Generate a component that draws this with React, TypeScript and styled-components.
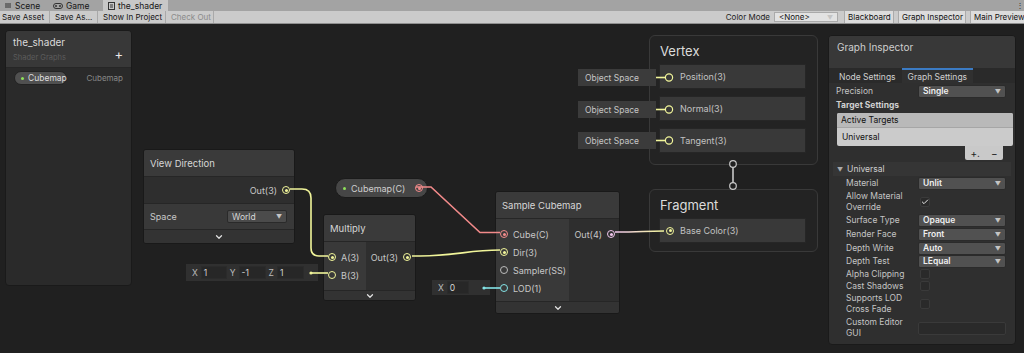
import React from "react"
import styled, { createGlobalStyle } from "styled-components"
import { ChevronDown, Check } from "lucide-react"

const YELLOW = "#f1f59a"
const RED = "#f28a8a"
const PINK = "#f0c6ec"
const CYAN = "#84e4e7"

const GlobalStyle = createGlobalStyle`
  html, body { margin: 0; padding: 0; background: #202020; }
  body { font-family: Inter, "Noto Sans", sans-serif; -webkit-font-smoothing: antialiased; }
  * { box-sizing: border-box; }
`

const Window = styled.div`
  width: 1024px;
  height: 353px;
  display: flex;
  flex-direction: column;
  overflow: hidden;
`

/* ---------- editor chrome ---------- */

const TabBar = styled.div`
  height: 11px;
  background: #a3a3a3;
  display: flex;
  padding-left: 4px;
`

const Tab = styled.div<{ $active?: boolean; $w: number }>`
  width: ${(p) => p.$w}px;
  display: flex;
  align-items: center;
  gap: 3px;
  padding-left: ${(p) => (p.$active ? 5 : 1)}px;
  background: ${(p) => (p.$active ? "#c8c8c8" : "transparent")};
  font-size: 8.5px;
  color: #161616;
`

const TabMore = styled.div`
  margin-left: auto;
  width: 8px;
  font-size: 8px;
  line-height: 11px;
  color: #333;
`

const Toolbar = styled.div`
  height: 13px;
  background: #cbcbcb;
  display: flex;
  align-items: stretch;
  border-bottom: 1px solid #8f8f8f;
`

const ToolButton = styled.div<{ $disabled?: boolean; $w: number }>`
  width: ${(p) => p.$w}px;
  display: flex;
  align-items: center;
  padding-left: 2px;
  font-size: 8px;
  color: ${(p) => (p.$disabled ? "#8a8a8a" : "#141414")};
  border-right: 1px solid #a9a9a9;
  margin-right: 3px;
`

const ToolSpacer = styled.div`
  flex: 1;
`

const ToolLabel = styled.div`
  display: flex;
  align-items: center;
  font-size: 8px;
  color: #222;
  margin-right: 4px;
`

const ToolSelect = styled.div`
  width: 64px;
  margin: 1px 6px 1px 0;
  display: flex;
  align-items: center;
  justify-content: space-between;
  padding: 0 4px;
  background: #e2e2e2;
  border: 1px solid #aaa;
  font-size: 8px;
  color: #111;
`

const ToolToggle = styled.div<{ $w: number }>`
  width: ${(p) => p.$w}px;
  flex: none;
  display: flex;
  align-items: center;
  padding-left: 3px;
  margin-right: 4px;
  background: #dcdcdc;
  border-left: 1px solid #aaa;
  border-right: 1px solid #aaa;
  font-size: 8px;
  color: #111;
  white-space: nowrap;
  overflow: hidden;
  &:last-child {
    margin-right: 0;
    border-right: none;
  }
`

/* ---------- canvas ---------- */

const Canvas = styled.div`
  flex: 1;
  position: relative;
  background: #202020;
  overflow: hidden;
`

const Wires = styled.svg`
  position: absolute;
  inset: 0;
  z-index: 2;
  pointer-events: none;
`

const Node = styled.div<{ $x: number; $y: number; $w: number }>`
  position: absolute;
  left: ${(p) => p.$x}px;
  top: ${(p) => p.$y}px;
  width: ${(p) => p.$w}px;
  background: #2e2e2e;
  border: 1px solid #191919;
  border-radius: 3px;
  overflow: hidden;
  z-index: 1;
  color: #c8c8c8;
`

const NodeHeader = styled.div`
  height: 27px;
  display: flex;
  align-items: center;
  padding-left: 6px;
  background: #3a3a3a;
  font-size: 9.5px;
  color: #d6d6d6;
  border-bottom: 1px solid #262626;
`

const NodeBody = styled.div<{ $h: number }>`
  height: ${(p) => p.$h}px;
  display: flex;
`

const InputCol = styled.div<{ $w: number }>`
  width: ${(p) => p.$w}px;
  background: #393939;
  padding-top: 6px;
  display: flex;
  flex-direction: column;
`

const OutputCol = styled.div`
  flex: 1;
  background: #2e2e2e;
  padding-top: 6px;
  display: flex;
  flex-direction: column;
  align-items: flex-end;
`

const PortRow = styled.div<{ $out?: boolean }>`
  height: 18px;
  display: flex;
  align-items: center;
  gap: 5px;
  padding: ${(p) => (p.$out ? "0 4px 0 0" : "0 0 0 4px")};
  font-size: 9px;
  color: #c8c8c8;
`

const Port = styled.span<{ $c: string; $filled?: boolean }>`
  width: 8px;
  height: 8px;
  flex: none;
  border-radius: 50%;
  border: 1.2px solid ${(p) => p.$c};
  display: inline-flex;
  align-items: center;
  justify-content: center;
  &::after {
    content: "";
    width: 3px;
    height: 3px;
    border-radius: 50%;
    background: ${(p) => (p.$filled ? p.$c : "transparent")};
  }
`

const OutSection = styled.div`
  height: 27px;
  display: flex;
  align-items: center;
  justify-content: flex-end;
  padding-right: 4px;
  gap: 5px;
  font-size: 9px;
  border-bottom: 1px solid #262626;
`

const ControlRow = styled.div`
  height: 25px;
  display: flex;
  align-items: center;
  justify-content: space-between;
  padding: 0 7px 0 6px;
  background: #393939;
  font-size: 9px;
`

const NodeSelect = styled.div<{ $w: number }>`
  width: ${(p) => p.$w}px;
  height: 13px;
  display: flex;
  align-items: center;
  justify-content: space-between;
  padding: 0 4px;
  background: #4b4b4b;
  border: 1px solid #2a2a2a;
  border-radius: 2px;
  font-size: 8.5px;
  color: #d8d8d8;
`

const Caret = styled.span`
  font-size: 6px;
  color: #c4c4c4;
`

const NodeFooter = styled.div<{ $h: number }>`
  height: ${(p) => p.$h}px;
  display: flex;
  align-items: center;
  justify-content: center;
  background: #333;
  border-top: 1px solid #262626;
  color: #e0e0e0;
`

const PropertyPill = styled.div<{ $x: number; $y: number }>`
  position: absolute;
  left: ${(p) => p.$x}px;
  top: ${(p) => p.$y}px;
  width: 93px;
  height: 20px;
  display: flex;
  align-items: center;
  gap: 5px;
  padding: 0 5px 0 7px;
  background: #464646;
  border: 1px solid #1b1b1b;
  border-radius: 10px;
  font-size: 9px;
  color: #cfcfcf;
  z-index: 1;
`

const GreenDot = styled.span`
  width: 3px;
  height: 3px;
  border-radius: 50%;
  background: #8ee05a;
  flex: none;
`

const PillSpacer = styled.span`
  flex: 1;
`

const InlineValue = styled.div<{ $x: number; $y: number; $w: number; $h: number }>`
  position: absolute;
  left: ${(p) => p.$x}px;
  top: ${(p) => p.$y}px;
  width: ${(p) => p.$w}px;
  height: ${(p) => p.$h}px;
  display: flex;
  align-items: center;
  gap: 3px;
  padding-left: 6px;
  background: #303030;
  font-size: 8.5px;
  color: #bdbdbd;
  z-index: 1;
`

const InlineField = styled.span<{ $w: number }>`
  width: ${(p) => p.$w}px;
  height: 13px;
  display: flex;
  align-items: center;
  padding-left: 2px;
  background: #272727;
  border: 1px solid #2b2b2b;
  color: #d4d4d4;
`

const ObjectSpace = styled.div<{ $y: number }>`
  position: absolute;
  left: 578px;
  top: ${(p) => p.$y}px;
  width: 78px;
  height: 17px;
  display: flex;
  align-items: center;
  padding-left: 7px;
  background: #3b3b3b;
  font-size: 8.5px;
  color: #c6c6c6;
  z-index: 3;
`

const StackBlock = styled.div<{ $y: number; $h: number }>`
  position: absolute;
  left: 649px;
  top: ${(p) => p.$y}px;
  width: 169px;
  height: ${(p) => p.$h}px;
  padding: 0 11px 0 9px;
  background: #232323;
  border: 1px solid #393939;
  border-radius: 6px;
  display: flex;
  flex-direction: column;
  gap: 5px;
  z-index: 1;
`

const StackTitle = styled.div`
  height: 23px;
  display: flex;
  align-items: flex-end;
  font-size: 13px;
  color: #dcdcdc;
  padding-left: 1px;
`

const StackSlot = styled.div`
  height: 25px;
  flex: none;
  display: flex;
  align-items: center;
  gap: 6px;
  padding-left: 6px;
  background: #393939;
  border: 1px solid #262626;
  font-size: 9px;
  color: #c2c2c2;
  & + & {
    margin-top: 2px;
  }
`

/* ---------- floating panels ---------- */

const Blackboard = styled.div`
  position: absolute;
  left: 5px;
  top: 6px;
  width: 127px;
  height: 256px;
  background: #2a2a2a;
  border: 1px solid #1a1a1a;
  border-radius: 4px;
  overflow: hidden;
  z-index: 4;
`

const BoardHeader = styled.div`
  height: 37px;
  position: relative;
  padding: 5px 7px;
  background: #383838;
  border-bottom: 1px solid #262626;
`

const BoardTitle = styled.div`
  font-size: 10px;
  color: #dadada;
`

const BoardSub = styled.div`
  margin-top: 5px;
  font-size: 7.5px;
  color: #5c5c5c;
`

const BoardAdd = styled.div`
  position: absolute;
  right: 8px;
  top: 15px;
  font-size: 13px;
  color: #e8e8e8;
`

const BoardRow = styled.div`
  display: flex;
  align-items: center;
  justify-content: space-between;
  padding: 3px 8px 0 8px;
`

const BoardPill = styled.div`
  width: 53px;
  height: 14px;
  display: flex;
  align-items: center;
  gap: 4px;
  padding-left: 6px;
  background: #505050;
  border: 1px solid #222;
  border-radius: 7px;
  font-size: 8.5px;
  color: #dedede;
`

const BoardType = styled.div`
  font-size: 8px;
  color: #888;
`

const Inspector = styled.div`
  position: absolute;
  left: 828px;
  top: 11px;
  width: 188px;
  height: 310px;
  background: #2f2f2f;
  border: 1px solid #1a1a1a;
  border-radius: 4px;
  overflow: hidden;
  z-index: 4;
  display: flex;
  flex-direction: column;
`

const InspHeader = styled.div`
  height: 32px;
  padding: 5px 8px;
  background: #383838;
  font-size: 10px;
  color: #cfcfcf;
`

const InspTabs = styled.div`
  height: 15px;
  display: flex;
  background: #2a2a2a;
  padding-left: 4px;
`

const InspTab = styled.div<{ $active?: boolean }>`
  display: flex;
  align-items: center;
  padding: 0 6px;
  font-size: 8.5px;
  color: #cfcfcf;
  background: ${(p) => (p.$active ? "#303030" : "#2a2a2a")};
  border-top: 2px solid ${(p) => (p.$active ? "#3b7bc4" : "transparent")};
`

const InspBody = styled.div`
  padding: 1px 9px 0 7px;
  display: flex;
  flex-direction: column;
`

const PropRow = styled.div<{ $h: number; $indent?: boolean }>`
  min-height: ${(p) => p.$h}px;
  display: grid;
  grid-template-columns: ${(p) => (p.$indent ? "72px" : "82px")} 88px;
  padding-left: ${(p) => (p.$indent ? 10 : 0)}px;
  align-items: center;
  font-size: 8.5px;
  color: #c4c4c4;
  line-height: 11px;
`

const SectionLabel = styled.div`
  height: 11px;
  display: flex;
  align-items: center;
  font-size: 8.5px;
  font-weight: 700;
  color: #d0d0d0;
`

const InspSelect = styled.div`
  height: 13px;
  display: flex;
  align-items: center;
  justify-content: space-between;
  padding: 0 4px;
  background: #515151;
  border: 1px solid #2b2b2b;
  border-radius: 2px;
  font-size: 8.5px;
  font-weight: 600;
  color: #efefef;
`

const CheckBox = styled.div`
  width: 10px;
  height: 10px;
  margin-left: 2px;
  display: flex;
  align-items: center;
  justify-content: center;
  background: #2a2a2a;
  border: 1px solid #3a3a3a;
  border-radius: 2px;
  color: #e6e6e6;
`

const TextField = styled.div`
  height: 13px;
  background: #2a2a2a;
  border: 1px solid #3a3a3a;
  border-radius: 2px;
`

const TargetList = styled.div`
  margin-top: 3px;
  width: 176px;
  margin-left: 1px;
  background: #cbcbcb;
  border-radius: 2px;
  overflow: hidden;
`

const TargetHead = styled.div`
  height: 15px;
  display: flex;
  align-items: center;
  padding-left: 4px;
  background: #b9b9b9;
  border-bottom: 1px solid #a6a6a6;
  font-size: 8.5px;
  color: #111;
`

const TargetItem = styled.div`
  height: 18px;
  display: flex;
  align-items: center;
  padding-left: 5px;
  font-size: 8.5px;
  color: #111;
`

const ListButtons = styled.div`
  align-self: flex-end;
  width: 38px;
  height: 14px;
  margin-right: 3px;
  display: flex;
  align-items: center;
  justify-content: space-around;
  background: #c9c9c9;
  border-radius: 0 0 2px 2px;
  font-size: 10px;
  color: #222;
`

const Foldout = styled.div`
  height: 14px;
  margin: 2px -5px 0 -3px;
  display: flex;
  align-items: center;
  gap: 4px;
  padding-left: 4px;
  background: #353535;
  font-size: 8.5px;
  color: #d0d0d0;
`

const FoldCaret = styled.span`
  font-size: 6px;
  color: #aaa;
`

/* ---------- icons ---------- */

const SceneIcon = () => (
  <svg width="7" height="7" viewBox="0 0 7 7">
    <path d="M1 1v5M3 1v5M5 1v5" stroke="#333" strokeWidth="1" />
  </svg>
)

const GameIcon = () => (
  <svg width="10" height="6" viewBox="0 0 10 6">
    <rect x="0.5" y="0.5" width="9" height="5" rx="2.5" fill="none" stroke="#333" />
    <circle cx="3" cy="3" r="1" fill="#333" />
    <circle cx="7" cy="3" r="1" fill="#333" />
  </svg>
)

const ShaderIcon = () => (
  <svg width="7" height="8" viewBox="0 0 7 8">
    <rect x="0.5" y="0.5" width="6" height="7" fill="none" stroke="#333" />
    <path d="M2 3h3M2 5h3" stroke="#333" />
  </svg>
)

const Chevron = () => <ChevronDown size={10} strokeWidth={3} />

/* ---------- data ---------- */

const graphRows: { label: string; kind: "select" | "check" | "field"; value?: string; h: number }[] = [
  { label: "Material", kind: "select", value: "Unlit", h: 14 },
  { label: "Allow Material Override", kind: "check", h: 23 },
  { label: "Surface Type", kind: "select", value: "Opaque", h: 14 },
  { label: "Render Face", kind: "select", value: "Front", h: 14 },
  { label: "Depth Write", kind: "select", value: "Auto", h: 14 },
  { label: "Depth Test", kind: "select", value: "LEqual", h: 13 },
  { label: "Alpha Clipping", kind: "check", h: 12 },
  { label: "Cast Shadows", kind: "check", h: 12 },
  { label: "Supports LOD Cross Fade", kind: "check", h: 24 },
  { label: "Custom Editor GUI", kind: "field", h: 24 },
]

const objectSpaceTops = [45, 77, 108]

export default function App() {
  return (
    <Window>
      <GlobalStyle />
      <TabBar>
        <Tab $w={48}>
          <SceneIcon />
          Scene
        </Tab>
        <Tab $w={51}>
          <GameIcon />
          Game
        </Tab>
        <Tab $w={65} $active>
          <ShaderIcon />
          the_shader
        </Tab>
        <TabMore>⋮</TabMore>
      </TabBar>
      <Toolbar>
        <ToolButton $w={50}>Save Asset</ToolButton>
        <ToolButton $w={45}>Save As...</ToolButton>
        <ToolButton $w={65}>Show In Project</ToolButton>
        <ToolButton $w={45} $disabled>
          Check Out
        </ToolButton>
        <ToolSpacer />
        <ToolLabel>Color Mode</ToolLabel>
        <ToolSelect>
          <span>&lt;None&gt;</span>
          <Caret>▼</Caret>
        </ToolSelect>
        <ToolToggle $w={50}>Blackboard</ToolToggle>
        <ToolToggle $w={68}>Graph Inspector</ToolToggle>
        <ToolToggle $w={54}>Main Preview</ToolToggle>
      </Toolbar>

      <Canvas>
        <Wires width="1024" height="329" viewBox="0 0 1024 329">
          <defs>
            <linearGradient id="outWire" x1="0" x2="1" y1="0" y2="0">
              <stop offset="0" stopColor={PINK} />
              <stop offset="1" stopColor={YELLOW} />
            </linearGradient>
          </defs>
          <path d="M290 165 H302 Q311 165 311 174 V224 Q311 232 319 232 H328" fill="none" stroke={YELLOW} strokeWidth="1.6" />
          <path d="M412 232 H420 C456 232 468 226 500 226" fill="none" stroke={YELLOW} strokeWidth="1.6" />
          <path d="M416 163 H431 L480 208.5 H500" fill="none" stroke={RED} strokeWidth="1.6" />
          <path d="M615 208 C640 208 645 207 664 207" fill="none" stroke="url(#outWire)" strokeWidth="1.6" />
          <path d="M311 249 H328" fill="none" stroke={YELLOW} strokeWidth="1.6" />
          <circle cx="311" cy="249" r="1.6" fill={YELLOW} />
          <path d="M484 264 H500" fill="none" stroke={CYAN} strokeWidth="1.6" />
          <circle cx="484" cy="264" r="1.6" fill={CYAN} />
          {objectSpaceTops.map((t) => (
            <g key={t}>
              <path d={`M650 ${t + 8.5} H665`} stroke={YELLOW} strokeWidth="1.6" />
              <circle cx="650" cy={t + 8.5} r="1.6" fill={YELLOW} />
              <circle cx="669" cy={t + 8.5} r="3.6" fill="#393939" stroke={YELLOW} strokeWidth="1.2" />
            </g>
          ))}
          <path d="M733 143 V159" stroke="#c8c8c8" strokeWidth="1.6" />
          <circle cx="733" cy="140" r="3.3" fill="#202020" stroke="#c8c8c8" strokeWidth="1.2" />
          <circle cx="733" cy="162" r="3.3" fill="#202020" stroke="#c8c8c8" strokeWidth="1.2" />
        </Wires>

        <Blackboard>
          <BoardHeader>
            <BoardTitle>the_shader</BoardTitle>
            <BoardSub>Shader Graphs</BoardSub>
            <BoardAdd>+</BoardAdd>
          </BoardHeader>
          <BoardRow>
            <BoardPill>
              <GreenDot />
              Cubemap
            </BoardPill>
            <BoardType>Cubemap</BoardType>
          </BoardRow>
        </Blackboard>

        <Node $x={143} $y={125} $w={152}>
          <NodeHeader>View Direction</NodeHeader>
          <OutSection>
            Out(3)
            <Port $c={YELLOW} $filled />
          </OutSection>
          <ControlRow>
            Space
            <NodeSelect $w={60}>
              World
              <Caret>▼</Caret>
            </NodeSelect>
          </ControlRow>
          <NodeFooter $h={14}>
            <Chevron />
          </NodeFooter>
        </Node>

        <PropertyPill $x={335} $y={154}>
          <GreenDot />
          Cubemap(C)
          <PillSpacer />
          <Port $c={RED} $filled />
        </PropertyPill>

        <InlineValue $x={186} $y={240} $w={132} $h={17}>
          X<InlineField $w={26}>1</InlineField>Y<InlineField $w={27}>-1</InlineField>Z<InlineField $w={27}>1</InlineField>
        </InlineValue>

        <Node $x={323} $y={190} $w={93}>
          <NodeHeader>Multiply</NodeHeader>
          <NodeBody $h={48}>
            <InputCol $w={42}>
              <PortRow>
                <Port $c={YELLOW} $filled />
                A(3)
              </PortRow>
              <PortRow>
                <Port $c={YELLOW} />
                B(3)
              </PortRow>
            </InputCol>
            <OutputCol>
              <PortRow $out>
                Out(3)
                <Port $c={YELLOW} $filled />
              </PortRow>
            </OutputCol>
          </NodeBody>
          <NodeFooter $h={10}>
            <Chevron />
          </NodeFooter>
        </Node>

        <InlineValue $x={432} $y={256} $w={58} $h={15}>
          X<InlineField $w={22}>0</InlineField>
        </InlineValue>

        <Node $x={495} $y={167} $w={125}>
          <NodeHeader>Sample Cubemap</NodeHeader>
          <NodeBody $h={82}>
            <InputCol $w={73}>
              <PortRow>
                <Port $c={RED} $filled />
                Cube(C)
              </PortRow>
              <PortRow>
                <Port $c={YELLOW} $filled />
                Dir(3)
              </PortRow>
              <PortRow>
                <Port $c="#bcbcbc" />
                Sampler(SS)
              </PortRow>
              <PortRow>
                <Port $c={CYAN} />
                LOD(1)
              </PortRow>
            </InputCol>
            <OutputCol>
              <PortRow $out>
                Out(4)
                <Port $c={PINK} $filled />
              </PortRow>
            </OutputCol>
          </NodeBody>
          <NodeFooter $h={12}>
            <Chevron />
          </NodeFooter>
        </Node>

        {objectSpaceTops.map((t) => (
          <ObjectSpace key={t} $y={t}>
            Object Space
          </ObjectSpace>
        ))}

        <StackBlock $y={11} $h={130}>
          <StackTitle>Vertex</StackTitle>
          <StackSlot>
            <Port $c="transparent" />
            Position(3)
          </StackSlot>
          <StackSlot>
            <Port $c="transparent" />
            Normal(3)
          </StackSlot>
          <StackSlot>
            <Port $c="transparent" />
            Tangent(3)
          </StackSlot>
        </StackBlock>

        <StackBlock $y={165} $h={63}>
          <StackTitle>Fragment</StackTitle>
          <StackSlot>
            <Port $c={YELLOW} $filled />
            Base Color(3)
          </StackSlot>
        </StackBlock>

        <Inspector>
          <InspHeader>Graph Inspector</InspHeader>
          <InspTabs>
            <InspTab>Node Settings</InspTab>
            <InspTab $active>Graph Settings</InspTab>
          </InspTabs>
          <InspBody>
            <PropRow $h={15}>
              Precision
              <InspSelect>
                Single
                <Caret>▼</Caret>
              </InspSelect>
            </PropRow>
            <SectionLabel>Target Settings</SectionLabel>
            <TargetList>
              <TargetHead>Active Targets</TargetHead>
              <TargetItem>Universal</TargetItem>
            </TargetList>
            <ListButtons>
              <span>+.</span>
              <span>−</span>
            </ListButtons>
            <Foldout>
              <FoldCaret>▼</FoldCaret>
              Universal
            </Foldout>
            {graphRows.map((r) => (
              <PropRow key={r.label} $h={r.h} $indent>
                <span>{r.label}</span>
                {r.kind === "select" && (
                  <InspSelect>
                    {r.value}
                    <Caret>▼</Caret>
                  </InspSelect>
                )}
                {r.kind === "check" && (
                  <CheckBox>{r.label.startsWith("Allow") && <Check size={8} strokeWidth={3} />}</CheckBox>
                )}
                {r.kind === "field" && <TextField />}
              </PropRow>
            ))}
          </InspBody>
        </Inspector>
      </Canvas>
    </Window>
  )
}
